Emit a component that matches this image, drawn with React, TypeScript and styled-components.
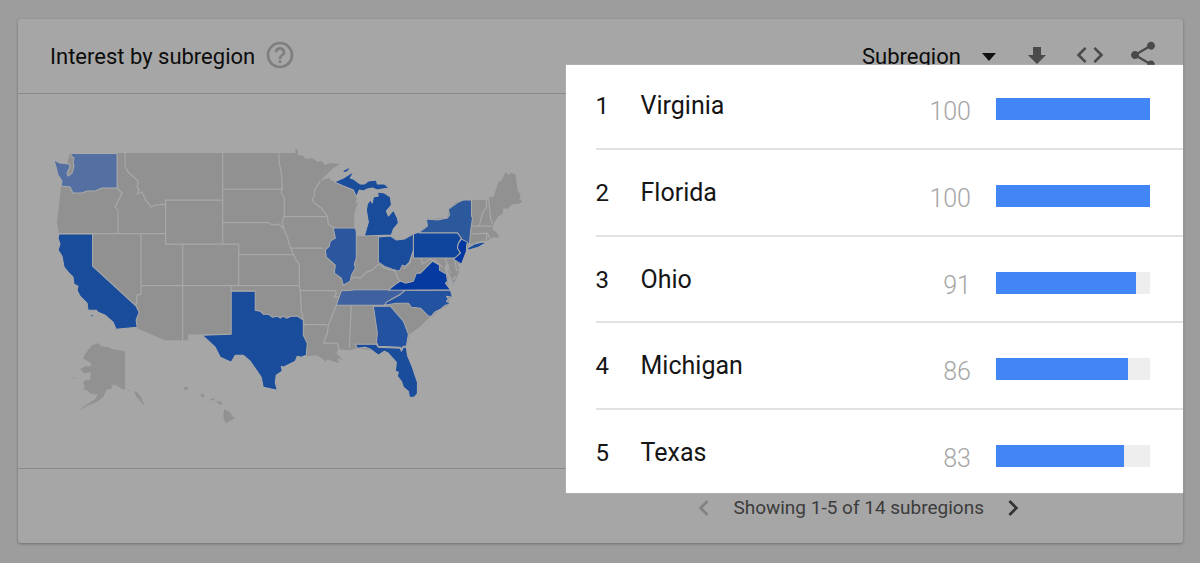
import React from "react";
import styled, { createGlobalStyle } from "styled-components";
import { MdChevronLeft, MdChevronRight, MdCode, MdHelpOutline, MdShare } from "react-icons/md";

const GlobalStyle = createGlobalStyle`
  *, *::before, *::after { box-sizing: border-box; }
  body {
    margin: 0;
    font-family: Roboto, "Liberation Sans", sans-serif;
    color: #0c0c0c;
    background: repeating-conic-gradient(#999999 0 25%, #a1a1a1 0 50%) 0 0 / 2px 2px;
  }
`;

const Page = styled.main`
  padding: 19px 17px 20px 18px;
`;

const Card = styled.section`
  background: #a6a6a6;
  border-radius: 3px;
  box-shadow: 0 1px 3px rgba(0, 0, 0, 0.3);
`;

const Header = styled.header`
  display: flex;
  align-items: center;
  justify-content: space-between;
  height: 75px;
  padding: 0 24px 2px 32px;
  border-bottom: 1px solid #8a8a8a;
`;

const TitleGroup = styled.div`
  display: flex;
  align-items: center;
  gap: 9px;
`;

const Title = styled.h2`
  margin: 0;
  padding-top: 4px;
  font-size: 22px;
  line-height: 28px;
  font-weight: 400;
`;

const IconButton = styled.button<{ $tone?: string }>`
  display: flex;
  align-items: center;
  justify-content: center;
  width: 32px;
  height: 32px;
  padding: 0;
  border: 0;
  background: none;
  color: ${(p) => p.$tone ?? "#4a4a4a"};
  cursor: pointer;
`;

const Tools = styled.div`
  display: flex;
  align-items: center;
  gap: 21px;
`;

const Picker = styled.label`
  display: grid;
  align-items: center;
  margin-right: 4px;
  padding-top: 4px;
  > * { grid-area: 1 / 1; }
  > svg { justify-self: end; pointer-events: none; }
`;

const Select = styled.select`
  appearance: none;
  margin: 0;
  padding: 0 35px 0 0;
  border: 0;
  background: none;
  color: inherit;
  font-family: inherit;
  font-size: 22px;
  line-height: 28px;
`;

const Body = styled.div`
  display: grid;
  grid-template-columns: 47% 53%;
`;

const MapPane = styled.div`
  padding: 51px 35px 38px 32px;
  svg { display: block; width: 100%; height: auto; }
`;

const Ranking = styled.div`
  position: relative;
  z-index: 1;
  margin: -29px 0 -25px;
  padding-left: 30px;
  background: #ffffff;
  box-shadow: 0 0 1px rgba(255, 255, 255, 0.6);
`;

const Table = styled.table`
  width: 100%;
  border-spacing: 0;
  table-layout: fixed;
  color: #151515;
`;

const Row = styled.tr`
  height: 86px;
  &:nth-child(even) { height: 87px; }
  &:first-child { height: 83px; }
  &:last-child { height: 85px; }
  & + & > * { border-top: 2px solid #e2e2e2; padding-top: 29px; }
`;

const Cell = styled.td`
  padding: 27px 0 0;
  vertical-align: top;
  text-align: left;
  font-size: 24px;
  line-height: 28px;
  font-weight: 400;
`;

const RankCell = styled(Cell)`
  width: 45px;
`;

const NameCell = styled(Cell)`
  font-size: 25px;
`;

const ValueCell = styled(Cell)`
  width: 110px;
  padding-right: 25px;
  text-align: right;
  font-size: 25px;
  font-weight: 300;
  color: #a6a6a6;
`;

const Value = styled.span`
  display: block;
  padding-top: 6px;
`;

const BarCell = styled(Cell)`
  width: 187px;
  padding-right: 33px;
`;

const Track = styled.div`
  height: 22px;
  margin-top: 6px;
  background: #eeeeee;
`;

const Fill = styled.div`
  height: 100%;
  background: #4285f4;
`;

const Footer = styled.footer`
  display: flex;
  align-items: center;
  justify-content: flex-end;
  gap: 13px;
  height: 75px;
  padding: 4px 154px 0 0;
  border-top: 1px solid #8a8a8a;
  font-size: 19px;
  line-height: 24px;
  color: #3c3c3c;
`;

const rows = [
  { name: "Virginia", value: 100 },
  { name: "Florida", value: 100 },
  { name: "Ohio", value: 91 },
  { name: "Michigan", value: 86 },
  { name: "Texas", value: 83 },
];

const land =
  "M70 153H295V149H297L298 155 303 156 306 159 312 158 317 162 321 161 325 165 330 163 340 164 333 168 327 174 320 181 326 179 329 178 331 181 335 181 343 186 350 188 355 191 357 198 354 205 358 201 355 210 354 228 356 235 359 236H391L397 240 404 239 412 234 420 231 427 226 426 219 447 218 448 209 456 202 471 200 487 200 489 197 493 197 498 182 501 181 505 172 508 175 510 173 515 174 517 190 520 195 519 199 522 202 517 204 512 204 507 209 503 208 502 214 497 217 493 224 492 229 498 235 498 238 493 237 487 241 480 241 468 245 466 252 461 264 457 263 459 270 455 281 452 286 451 278 447 271 449 265 446 263 444 268 446 273 448 277 447 284 450 289 452 297 448 299 450 304 440 309 432 316 428 318 420 326 409 334 406 346 398 352 380 352 370 350 357 348 349 350 338 349 336 353 343 360 337 358 339 363 332 361 328 359 325 361 320 357 316 355 306 356 297 345 202 335H188V340H165L137 328 92 266 59 234 57 222 59 205 61 187Z";

const isles = [
  "M88 350L92 345 98 343 101 346 109 347 113 349 125 351V389H122L118 386 113 384 111 389 107 389 103 397 96 402 88 405 80 410 79 410 87 404 95 399 98 394 94 394 90 393 87 390 83 389 85 386 83 383 85 380 90 380 91 372 84 373 80 369 85 366 91 366 91 363 83 358 85 354Z",
  "M125 389L130 390 134 394 138 398 141 402 145 406 143 402 141 397 137 392 134 391 136 396 131 391Z",
  "M183 388L187 386 188 389 185 390Z",
  "M200 395L202 393 205 396 202 397Z",
  "M210 399L213 398 215 400 211 400Z",
  "M216 401L220 401 223 404 219 404Z",
  "M224 409L230 412 232 416 235 418 231 420 226 423 224 420 223 415Z",
  "M71 377L76 378 76 379Z",
];

const borders =
  "M58 233.5H165M117 153V188L122 193 115 207 118 210V233M125 153V166L128 172 138 181 137 188 139 189 137 194 142 192 145 199 151 207 155 205 165 204M165.500 200H222.500V244H165.500ZM222.500 153V200M222.500 189H282M278.500 153L279 163 281 172 282 188 281 193 284 198V216L282 221 283 227 287 237 290 247 293 254 296 260 299 264V285L300 291 301 310 304 325M222.500 222.500H268L272 225 278 224 283 228M222.500 244H238.500V285.500M238.500 254.500H294M141 233.500V294L137 295 136 305M141 285.500H299M182.500 244V340M231 285V291H255M231 334L202 335H188M284 216.500H326M291 248H323M320 181L318 184 314 190V196L312 200 314 203 321 208 327 216 328 224 335 229M300 290.500H335L336 293 334 297 339 297M304 324.500H327M336 305L332 315 328 325 327 333 323 343 337 343 339 350M351 305L349 348M363 228M378.500 236V262M344 285L350 279 354 277 360 278 366 272 372 270 378 264 384 268 391 270 395 271 397 278 401 282M412 250L410 262 403 269M414 257L421 258 422 264 429 259 436 261 442 267M454 257L456 270 459 270M486 200L486 207 482 213 479 225M488 197L490 218 492 224M471 226H485L492 226M471 234L487 233 490 240M486 234V241M445 258L448 268 450 274";

const states: { id: string; color: string; d: string }[] = [
  { id: "WA", color: "#5470a2", d: "M54 160L60 163 69 164 70 167 67 173 68 176 72 173 74 166 73 162 74 158 71 156 71 153.500H117V188H102L95 191 87 191 82 193 73 193 70 187 61 186 62 181 58 175 56 167Z" },
  { id: "CA", color: "#1a4c9c", d: "M59 234H92.500V266L136 306 139 312 136 320 137 327 116 329 113 322 105 315 98 312 96 310 88 310 87 303 80 296 77 290 78 286 74 284 73 277 69 273 64 267 62 256 58 250 60 244 58 238Z" },
  { id: "TX", color: "#1a4c9c", d: "M231 291H255V310L260 311 263 314 268 314 272 317 277 316 280 318 283 316 286 318 291 316 297 316 303 320V335L307 343 306 355 301 357 297 356 295 361 283 367 281 366 282 371 276 375 275 382 277 390 263 387 261 377 250 361 243 355 235 355 231 362 220 357 215 347 202 335 231 334Z" },
  { id: "IL", color: "#2c579f", d: "M333 228H355L356 232V258L354 264 355 268 351 275 350 281 343 285 341 278 334 273 335 265 326 257 325 250 329 246 330 241 335 238Z" },
  { id: "MI upper", color: "#1a4c9c", d: "M334 182L343 178 351 173 354 171 350 178 353 179 360 184 364 184 368 181 376 180 377 184 384 184 389 188 382 189 377 190 372 188 367 189 363 191 359 190 356 197 353 190 343 186Z" },
  { id: "MI lower", color: "#1a4c9c", d: "M364 236L368 222 366 210 367 204 370 200 372 203 373 197 378 196 377 192 384 193 390 197 391 205 386 211 388 216 393 210 397 218 398 223 393 229 391 235Z" },
  { id: "OH", color: "#1a4c9c", d: "M378 237L390 236 396 240 404 239 413 234V250L409 262 405 266 402 265 399 271 392 269 384 266 378 262Z" },
  { id: "NY", color: "#2c589c", d: "M419 232L427 226 426 219 437 220 447 218 449 215 448 209 458 202 463 200H471V216L472 218 470 232 469 244 461 240 457 233H419Z" },
  { id: "PA", color: "#0f459b", d: "M413 234L419 232V233H457L461 238 458 243 457 248 460 252 456 258H413Z" },
  { id: "NJ", color: "#0236a0", d: "M461 239L467 242 466 246 466 251 461 264 453 259 460 253 457 248 458 243Z" },
  { id: "Long Island", color: "#1a4c9c", d: "M467 248L474 244 482 242 485 243 478 247 468 250Z" },
  { id: "TN", color: "#3f619f", d: "M341 290.500L352 290V289.500H405L402 293 391 299 384 305H336Z" },
  { id: "NC", color: "#2352a0", d: "M405 290H450L452 297 446 296 448 299 446 301 450 304 445 305 440 309 434 312 431 316 428 316 420 308 411 307 408 303H396L384 305 386 302 399 295Z" },
  { id: "VA", color: "#063aa0", d: "M388 290L394 285 400 281 405 283 413 281 416 273 420 273 425 268 432 261 439 265 439 270 446 274 447 281 445 283 450 289.500Z" },
  { id: "Eastern Shore", color: "#1a4c9c", d: "M451 285L452 280 455 276 453 282Z" },
  { id: "GA", color: "#2352a0", d: "M373 306H390L396 313 403 321 408 334 406 346 403 346 401 349 400 347 378 346 376 342 377 333Z" },
  { id: "FL", color: "#1a4c9c", d: "M355 344H376L378 347 400 348 401 351 403 347H406L407 355 412 367 417 382 417 393 414 397 409 397 408 391 403 387 401 381 397 376 398 372 395 371 396 362 388 353 384 351 378 355 370 349 365 347 357 348Z" },
];

function SubregionMap() {
  return (
    <svg viewBox="50 145 480 285" role="img" aria-label="Map of interest by state" strokeLinejoin="round">
      <path d={land} fill="#919191" />
      {isles.map((d) => (
        <path key={d} d={d} fill="#919191" />
      ))}
      <path d="M354 229L354 213 357 205 361 197 366 191 374 189 377 194 370 199 366 205 366 213 367 222 363 236H357Z" fill="#a6a6a6" />
      <path d="M391 305L396 303H408L411 307 420 308 428 317" fill="#919191" />
      <path d={borders} fill="none" stroke="#a8a8a8" strokeWidth="1.2" />
      {states.map((s) => (
        <path key={s.id} d={s.d} fill={s.color} stroke="#aaaaaa" strokeWidth="1" />
      ))}
      <path d="M343 171L349 168 347 171 344 172Z" fill="#1a4c9c" />
      <path d="M91 315H93V316H91Z" fill="#3f619f" />
    </svg>
  );
}

export default function App() {
  return (
    <>
      <GlobalStyle />
      <Page>
        <Card>
          <Header>
            <TitleGroup>
              <Title>Interest by subregion</Title>
              <IconButton $tone="#7e7e7e" aria-label="Help">
                <MdHelpOutline size={32} />
              </IconButton>
            </TitleGroup>
            <Tools>
              <Picker>
                <Select aria-label="Resolution" defaultValue="Subregion">
                  <option>Subregion</option>
                </Select>
                <svg width="14" height="8" viewBox="0 0 14 8" aria-hidden="true">
                  <path d="M0 0H14L7 8Z" fill="#111111" />
                </svg>
              </Picker>
              <IconButton aria-label="Download">
                <svg width="18" height="17" viewBox="0 0 18 17" aria-hidden="true">
                  <path d="M5 0H13V8H18L9 17 0 8H5Z" fill="currentColor" />
                </svg>
              </IconButton>
              <IconButton aria-label="Embed">
                <MdCode size={32} />
              </IconButton>
              <IconButton aria-label="Share">
                <MdShare size={32} />
              </IconButton>
            </Tools>
          </Header>
          <Body>
            <MapPane>
              <SubregionMap />
            </MapPane>
            <Ranking>
              <Table>
                <tbody>
                  {rows.map((row, i) => (
                    <Row key={row.name}>
                      <RankCell>{i + 1}</RankCell>
                      <NameCell as="th" scope="row">{row.name}</NameCell>
                      <ValueCell>
                        <Value>{row.value}</Value>
                      </ValueCell>
                      <BarCell>
                        <Track>
                          <Fill style={{ width: `${row.value}%` }} />
                        </Track>
                      </BarCell>
                    </Row>
                  ))}
                </tbody>
              </Table>
            </Ranking>
          </Body>
          <Footer>
            <IconButton $tone="#828282" aria-label="Previous page">
              <MdChevronLeft size={32} />
            </IconButton>
            <span>Showing 1-5 of 14 subregions</span>
            <IconButton $tone="#333333" aria-label="Next page">
              <MdChevronRight size={32} />
            </IconButton>
          </Footer>
        </Card>
      </Page>
    </>
  );
}
